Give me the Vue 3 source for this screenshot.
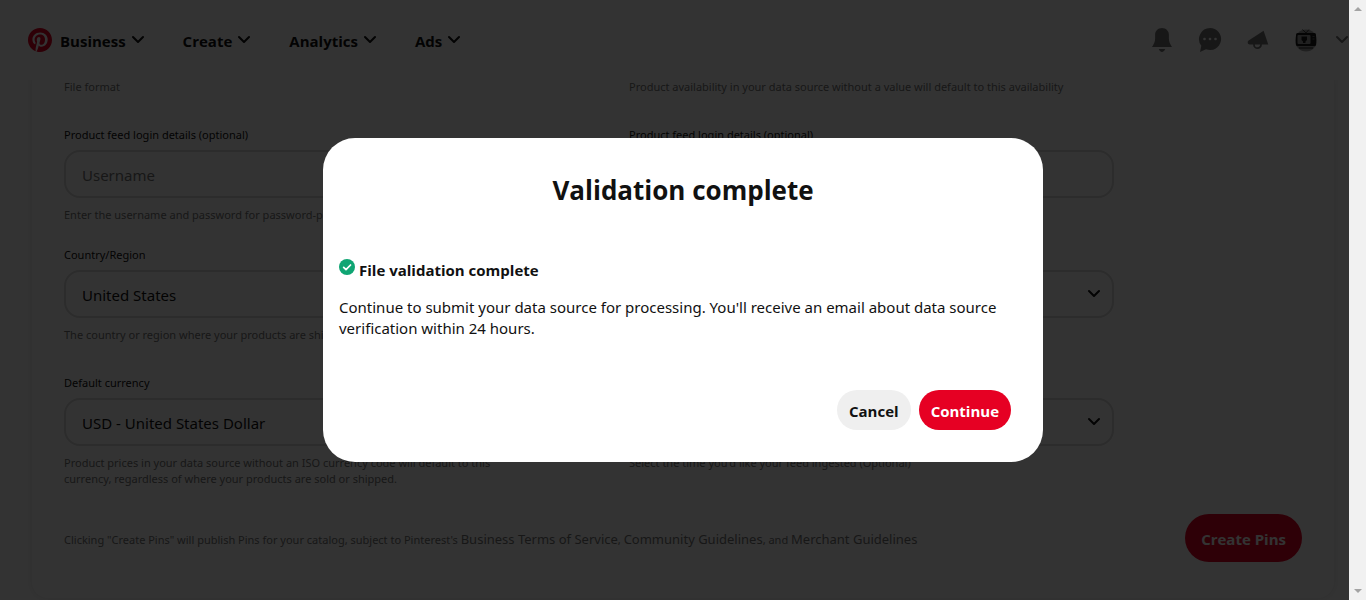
<template>
  <div class="app">
    <div class="page">
      <header class="top-bar">
        <nav class="nav" aria-label="Main">
          <button type="button" class="nav-item" v-for="(item, i) in navItems" :key="item">
            <svg v-if="i === 0" class="logo" viewBox="0 0 24 24" aria-hidden="true">
              <circle cx="12" cy="12" r="11.5" fill="#fff" />
              <path fill="#e60023" d="M0 12c0 5.123 3.211 9.497 7.73 11.218-.11-.937-.227-2.482.025-3.566.217-.932 1.401-5.938 1.401-5.938s-.357-.715-.357-1.774c0-1.66.962-2.9 2.161-2.9 1.02 0 1.512.765 1.512 1.682 0 1.025-.653 2.557-.99 3.978-.281 1.189.597 2.159 1.769 2.159 2.123 0 3.756-2.239 3.756-5.471 0-2.861-2.056-4.86-4.991-4.86-3.398 0-5.393 2.549-5.393 5.184 0 1.027.395 2.127.889 2.726a.36.36 0 0 1 .083.343c-.091.378-.293 1.189-.332 1.355-.053.218-.173.265-.4.159-1.492-.694-2.424-2.875-2.424-4.627 0-3.769 2.737-7.229 7.892-7.229 4.144 0 7.365 2.953 7.365 6.899 0 4.117-2.595 7.431-6.199 7.431-1.211 0-2.348-.63-2.738-1.373 0 0-.599 2.282-.744 2.84-.282 1.084-1.064 2.456-1.549 3.235C9.584 23.815 10.77 24 12 24c6.627 0 12-5.373 12-12S18.627 0 12 0 0 5.373 0 12" />
            </svg>
            <span>{{ item }}</span>
            <svg class="chevron" viewBox="0 0 12 12" aria-hidden="true"><path d="m1 3 5 5 5-5" /></svg>
          </button>
        </nav>

        <div class="actions">
          <button type="button" class="icon-btn" aria-label="Notifications">
            <svg viewBox="0 0 24 24"><path d="M12 0C8 0 5.100 2.900 5.100 6.600v3.900c0 3-1.100 5.300-3.100 8.500h20c-2-3.200-3.100-5.500-3.100-8.500V6.600C18.900 2.900 16 0 12 0zM8.800 21c.6 1.600 1.800 3 3.200 3s2.600-1.400 3.200-3z" /></svg>
          </button>
          <button type="button" class="icon-btn" aria-label="Messages">
            <svg viewBox="0 0 24 24">
              <path d="M12 0a11 11 0 0 0-8.700 17.700L2 24l6-2.800A11 11 0 1 0 12 0z" />
              <g fill="#fff"><circle cx="6.500" cy="11" r="1.300" /><circle cx="12" cy="11" r="1.300" /><circle cx="17.500" cy="11" r="1.300" /></g>
            </svg>
          </button>
          <button type="button" class="icon-btn" aria-label="News">
            <svg viewBox="0 0 24 24">
              <path d="M17.600 2.700 2.600 12.600c-1.500 1.100-1.100 3.900 1 3.900h18.700z" />
              <path d="M8 15.500v1.200a3.500 3.500 0 0 0 7 0v-1.200" fill="none" stroke="#767676" stroke-width="1.800" />
            </svg>
          </button>
          <button type="button" class="icon-btn" aria-label="Profile">
            <svg viewBox="0 0 24 24">
              <circle cx="12" cy="12.500" r="11" fill="#a0a0a0" />
              <path d="m8.500 1.500 3.500 3.500 3-3.500" fill="none" stroke="#444" />
              <rect x="2" y="5" width="20" height="13" rx="1.500" fill="#1c1c1c" />
              <rect x="3.500" y="7" width="13" height="9" rx="1" fill="#a0a0a0" />
              <path d="M7.500 8.500h5.500v3.500l-1.500 1.500v1.500h-2.500v-1.500L7.500 12z" fill="#1c1c1c" />
              <path d="M18.500 8.500h2M18.500 11h2" stroke="#666" />
              <path d="M5 20h14" stroke="#555" stroke-width="1.500" />
            </svg>
          </button>
          <button type="button" class="menu-btn" aria-label="Account menu">
            <svg class="chevron" viewBox="0 0 12 12"><path d="m1 3 5 5 5-5" /></svg>
          </button>
        </div>
      </header>

      <main class="content">
        <form class="card" @submit.prevent>
          <div class="row">
            <p class="help">File format</p>
            <p class="help">Product availability in your data source without a value will default to this availability</p>
          </div>

          <div class="row" v-for="(row, r) in rows" :key="r" :class="{ tight: r === 1 }">
            <div class="field" v-for="field in row" :key="field.id">
              <label :for="field.id">{{ field.label }}</label>
              <div class="control">
                <select v-if="field.options" :id="field.id" v-model="field.value">
                  <option v-for="option in field.options" :key="option">{{ option }}</option>
                </select>
                <input v-else :id="field.id" :type="field.type" v-model="field.value" :placeholder="field.placeholder" />
                <svg v-if="field.options" class="chevron" viewBox="0 0 12 12" aria-hidden="true"><path d="m1 3 5 5 5-5" /></svg>
              </div>
              <p v-if="field.help" class="help">{{ field.help }}</p>
            </div>
          </div>

          <div class="card-footer">
            <p class="help">
              Clicking "Create Pins" will publish Pins for your catalog, subject to Pinterest's
              <a href="#">Business Terms of Service</a>, <a href="#">Community Guidelines</a>, and
              <a href="#">Merchant Guidelines</a>
            </p>
            <button type="submit" class="btn btn-red btn-large">Create Pins</button>
          </div>
        </form>
      </main>

      <div v-if="dialogOpen" class="backdrop"></div>
    </div>

    <div class="scrollbar" aria-hidden="true">
      <svg viewBox="0 0 8 4"><path d="M0 4 4 0l4 4z" /></svg>
      <svg viewBox="0 0 8 4"><path d="m0 0 4 4 4-4z" /></svg>
    </div>

    <div v-if="dialogOpen" class="modal-layer">
      <section class="modal" role="dialog" aria-modal="true" aria-labelledby="modal-title">
        <h1 id="modal-title">Validation complete</h1>
        <div class="modal-body">
          <h2>
            <svg viewBox="0 0 24 24" aria-hidden="true">
              <circle cx="12" cy="12" r="12" fill="#0fa573" />
              <path d="m7 12.500 3.500 3.500 6.800-7" fill="none" stroke="#fff" stroke-width="2.600" stroke-linecap="round" stroke-linejoin="round" />
            </svg>
            File validation complete
          </h2>
          <p>
            Continue to submit your data source for processing. You'll receive an email about data source
            verification within 24 hours.
          </p>
        </div>
        <div class="modal-actions">
          <button type="button" class="btn btn-gray" @click="dialogOpen = false">Cancel</button>
          <button type="button" class="btn btn-red" @click="dialogOpen = false">Continue</button>
        </div>
      </section>
    </div>
  </div>
</template>

<script setup>
import { ref } from 'vue';

const dialogOpen = ref(true);
const navItems = ['Business', 'Create', 'Analytics', 'Ads'];

const rows = ref([
  [
    {
      id: 'username',
      type: 'text',
      label: 'Product feed login details (optional)',
      placeholder: 'Username',
      value: '',
      help: 'Enter the username and password for password-protected files',
    },
    {
      id: 'password',
      type: 'password',
      label: 'Product feed login details (optional)',
      placeholder: 'Password',
      value: '',
    },
  ],
  [
    {
      id: 'country',
      label: 'Country/Region',
      value: 'United States',
      options: ['United States', 'Canada', 'United Kingdom'],
      help: 'The country or region where your products are shipped',
    },
    { id: 'language', label: 'Language', value: 'English', options: ['English', 'French'] },
  ],
  [
    {
      id: 'currency',
      label: 'Default currency',
      value: 'USD - United States Dollar',
      options: ['USD - United States Dollar', 'CAD - Canadian Dollar'],
      help: 'Product prices in your data source without an ISO currency code will default to this currency, regardless of where your products are sold or shipped.',
    },
    {
      id: 'time',
      label: 'Ingestion time',
      value: '12:00 AM',
      options: ['12:00 AM', '12:00 PM'],
      help: "Select the time you'd like your feed ingested (Optional)",
    },
  ],
]);
</script>

<style>
body {
  margin: 0;
  background: #fff;
}
</style>

<style scoped>
.app {
  display: flex;
  height: 100vh;
  overflow: hidden;
  font-family: "Noto Sans", "Open Sans", sans-serif;
  color: #111;
}

.app * {
  box-sizing: border-box;
}

.page {
  position: relative;
  flex: 1;
  min-width: 0;
  overflow: hidden;
}

h1,
h2,
p {
  margin: 0;
}

button,
input,
select {
  font-family: inherit;
  color: inherit;
}

h1,
h2,
button {
  font-family: "Open Sans", "Noto Sans", sans-serif;
}

button {
  padding: 0;
  border: none;
  background: none;
  cursor: pointer;
}

/* Top bar */
.top-bar {
  position: absolute;
  inset: 0 0 auto 0;
  z-index: 1;
  display: flex;
  justify-content: space-between;
  align-items: center;
  height: 80px;
  padding-left: 28px;
  background: #fff;
}

.nav {
  display: flex;
  gap: 39px;
}

.nav-item {
  display: flex;
  align-items: center;
  gap: 6px;
  font-size: 15px;
  line-height: 24px;
  font-weight: 700;
}

.nav-item span {
  padding-top: 2px;
}

.logo {
  width: 24px;
  height: 24px;
  margin-right: 2px;
}

.chevron {
  flex-shrink: 0;
  width: 12px;
  height: 12px;
  fill: none;
  stroke: currentColor;
  stroke-width: 2;
  stroke-linecap: round;
  stroke-linejoin: round;
}

.actions {
  display: flex;
  align-items: center;
  gap: 24px;
}

.icon-btn,
.icon-btn svg {
  display: block;
  width: 24px;
  height: 24px;
  fill: #767676;
}

.menu-btn {
  display: flex;
  padding-right: 1px;
  margin-left: -6px;
  color: #767676;
}

/* Form */
.content {
  padding: 77px 15px 0 32px;
}

.card {
  display: flex;
  flex-direction: column;
  gap: 31px;
  padding: 0 32px 36px;
  border-radius: 0 0 16px 16px;
  box-shadow: 0 0 8px rgba(0, 0, 0, 0.1);
}

.row {
  display: grid;
  grid-template-columns: repeat(2, minmax(0, 485px));
  column-gap: 80px;
}

.row.tight {
  margin-top: -8px;
}

.field {
  display: flex;
  flex-direction: column;
  gap: 7px;
}

label,
.help {
  font-size: 11px;
  line-height: 16px;
}

label {
  padding-top: 1px;
}

.help {
  padding-top: 2px;
  color: #767676;
}

.field .help {
  max-width: 456px;
}

.control {
  position: relative;
}

.control input,
.control select {
  display: block;
  width: 100%;
  height: 48px;
  padding: 2px 16px 0;
  border: 2px solid #dadada;
  border-radius: 16px;
  background: #fff;
  font-size: 15px;
  appearance: none;
}

.control input::placeholder {
  color: #767676;
}

.control .chevron {
  position: absolute;
  top: 18px;
  right: 14px;
  pointer-events: none;
}

.card-footer {
  display: flex;
  justify-content: space-between;
  align-items: center;
  margin-top: -4px;
}

.card-footer a {
  color: #767676;
  font-size: 13px;
  text-decoration: none;
}

/* Buttons */
.btn {
  height: 40px;
  padding: 2px 12px 0;
  border-radius: 20px;
  font-size: 15px;
  font-weight: 700;
}

.btn-large {
  height: 48px;
  padding: 2px 16px 0;
  border-radius: 24px;
}

.btn-gray {
  background: #efefef;
}

.btn-red {
  background: #e60023;
  color: #fff;
}

/* Scrollbar */
.scrollbar {
  display: flex;
  flex-direction: column;
  justify-content: space-between;
  align-items: center;
  width: 17px;
  padding: 7px 0;
  background: #f1f1f1;
}

.scrollbar svg {
  width: 8px;
  height: 4px;
  fill: #a3a3a3;
}

/* Dialog */
.backdrop {
  position: absolute;
  inset: 0;
  z-index: 2;
  background: rgba(0, 0, 0, 0.8);
}

.modal-layer {
  position: fixed;
  inset: 0;
  z-index: 3;
  display: flex;
  align-items: center;
  justify-content: center;
}

.modal {
  width: 100%;
  max-width: 720px;
  border-radius: 32px;
  background: #fff;
}

.modal h1 {
  padding: 32px 32px 48px;
  font-size: 26px;
  line-height: 40px;
  text-align: center;
}

.modal-body {
  padding: 0 16px;
}

.modal-body h2 {
  display: flex;
  gap: 4px;
  font-size: 15px;
  line-height: 24px;
}

.modal-body h2 svg {
  width: 16px;
  height: 16px;
  margin-top: 1px;
}

.modal-body p {
  margin-top: 15px;
  font-size: 15px;
  line-height: 21px;
}

.modal-actions {
  display: flex;
  justify-content: flex-end;
  gap: 8px;
  padding: 51px 32px 32px;
}
</style>
